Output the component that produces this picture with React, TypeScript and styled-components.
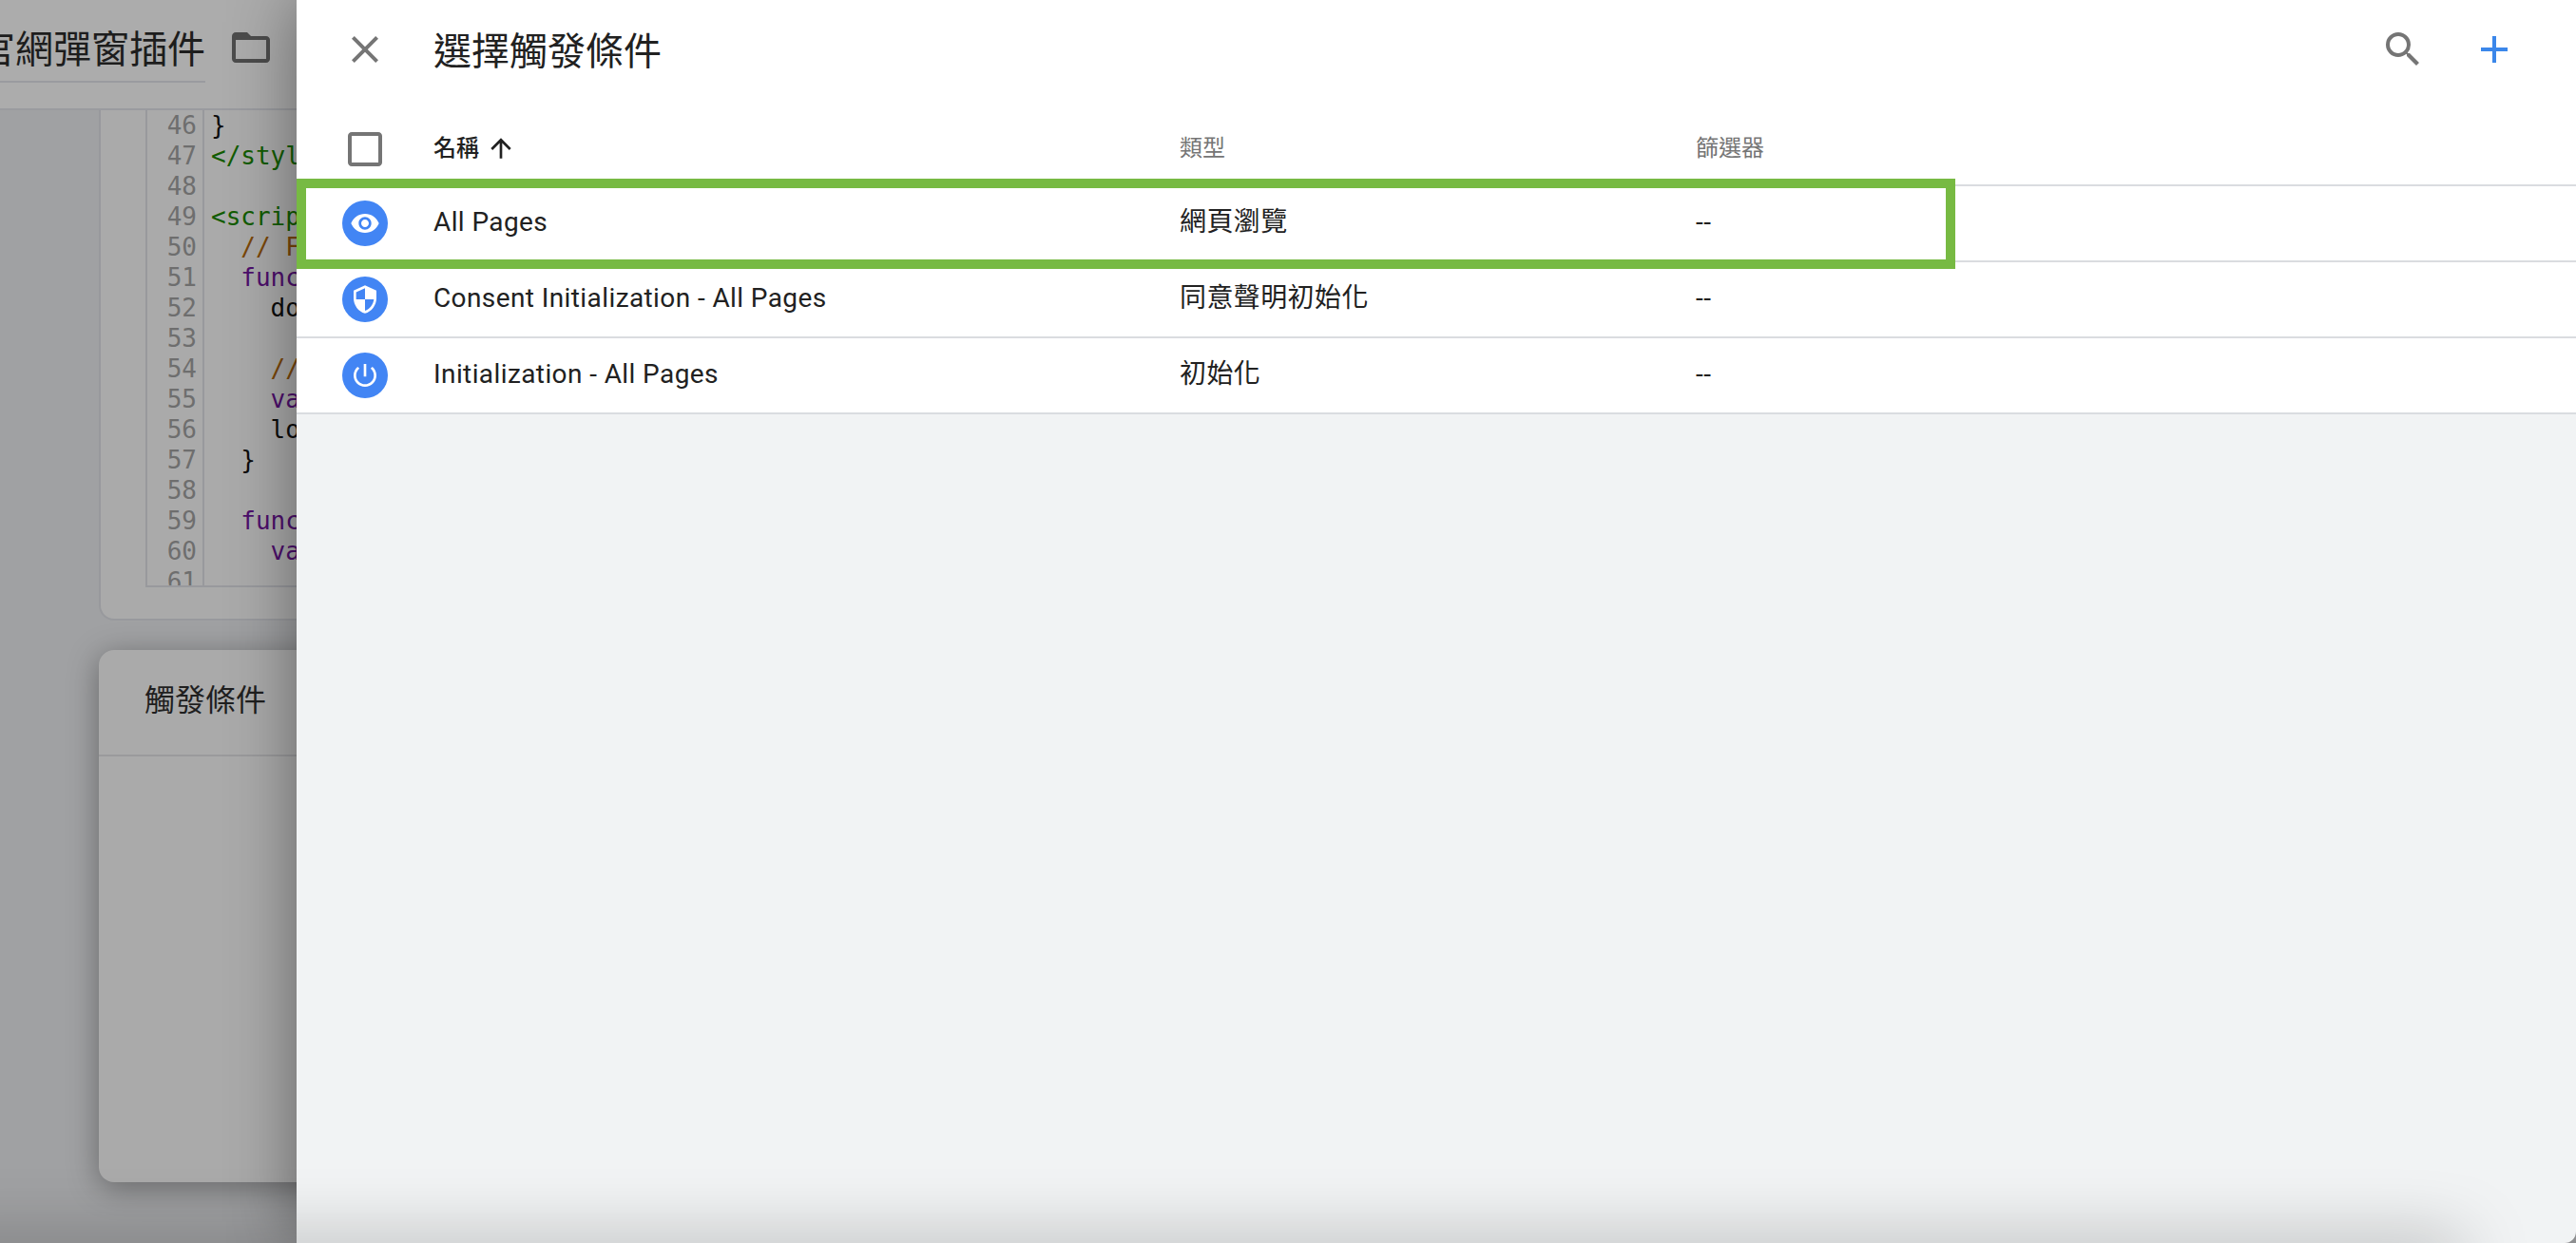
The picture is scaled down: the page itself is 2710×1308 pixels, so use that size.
import styled, { createGlobalStyle } from "styled-components";

const GlobalStyle = createGlobalStyle`
  html, body {
    margin: 0;
    padding: 0;
    background: #a0a1a3;
  }
  * {
    box-sizing: border-box;
  }
`;

const CJK = `Roboto, "Noto Sans CJK TC", sans-serif`;
const COLUMNS = "144px 785px 543px 1fr";

const Page = styled.div`
  position: relative;
  display: flex;
  width: 2710px;
  height: 1308px;
  overflow: hidden;
  font-family: ${CJK};

  &::after {
    content: "";
    position: absolute;
    left: -80px;
    right: 120px;
    bottom: -30px;
    height: 30px;
    z-index: 3;
    box-shadow: 0 0 70px rgba(0, 0, 0, 0.36);
    pointer-events: none;
  }
`;

/* behind the drawer */
const Backdrop = styled.div`
  display: flex;
  flex-direction: column;
  flex: 0 0 312px;
  width: 312px;
  overflow: hidden;
  background: #a0a1a3;
`;

const EditorBar = styled.div`
  display: flex;
  justify-content: flex-end;
  align-items: flex-start;
  gap: 24px;
  flex: 0 0 116px;
  padding: 26px 24px 0 0;
  background: #acacac;
  border-bottom: 2px solid #9a9b9f;
`;

const EditorTitle = styled.div`
  flex-shrink: 0;
  height: 61px;
  font-size: 40px;
  line-height: 54px;
  white-space: nowrap;
  color: #1d1d1d;
  border-bottom: 2px solid #9a9b9f;
`;

const Glyph = styled.svg<{ $size: number; $color: string }>`
  display: block;
  flex-shrink: 0;
  width: ${({ $size }) => $size}px;
  height: ${({ $size }) => $size}px;
  fill: ${({ $color }) => $color};
`;

const Cards = styled.div`
  display: flex;
  flex-direction: column;
  gap: 31px;
  padding-left: 104px;
`;

const CodeCard = styled.div`
  width: 800px;
  height: 537px;
  padding-left: 47px;
  background: #aaaaaa;
  border: 2px solid #98999d;
  border-top: 0;
  border-radius: 0 0 16px 16px;
`;

const CodeBox = styled.div`
  display: flex;
  height: 502px;
  overflow: hidden;
  font-family: "DejaVu Sans Mono", monospace;
  font-size: 26px;
  line-height: 32px;
  border-left: 2px solid #98999d;
  border-bottom: 2px solid #98999d;
`;

const Gutter = styled.div`
  flex: 0 0 60px;
  padding-right: 6px;
  text-align: right;
  color: #6e6e6e;
  border-right: 2px solid #98999d;
`;

const CodeLines = styled.div`
  padding-left: 7px;
  white-space: pre;
`;

const CodeLine = styled.div<{ $tone?: "tag" | "comment" | "keyword" }>`
  height: 32px;
  color: ${({ $tone }) =>
    $tone === "tag"
      ? "#125c00"
      : $tone === "comment"
        ? "#7a4708"
        : $tone === "keyword"
          ? "#4d0f6c"
          : "#0c0c0c"};
`;

const TriggerCard = styled.div`
  width: 800px;
  height: 560px;
  background: #aaaaaa;
  border-radius: 16px;
  box-shadow: 0 6px 32px rgba(0, 0, 0, 0.36);
`;

const TriggerHeader = styled.div`
  height: 112px;
  padding: 30px 0 0 48px;
  font-size: 32px;
  line-height: 46px;
  color: #1f1f1f;
  border-bottom: 2px solid #9a9a9c;
`;

/* drawer */
const Drawer = styled.div`
  position: relative;
  z-index: 2;
  flex: 1;
  display: flex;
  flex-direction: column;
  background: #f1f3f4;
  border-bottom-right-radius: 12px;
  box-shadow: 0 0 70px rgba(0, 0, 0, 0.42);
`;

const TopBar = styled.div`
  display: flex;
  align-items: center;
  flex: 0 0 104px;
  padding: 0 62px 0 48px;
  background: #ffffff;
`;

const DrawerTitle = styled.div`
  flex: 1;
  margin-left: 48px;
  padding-top: 6px;
  font-size: 40px;
  line-height: 56px;
  color: #212121;
`;

const TopActions = styled.div`
  display: flex;
  gap: 48px;
`;

const HeadRow = styled.div`
  display: grid;
  grid-template-columns: ${COLUMNS};
  align-items: center;
  height: 92px;
  padding-top: 14px;
  background: #ffffff;
  border-bottom: 2px solid #dadce0;
`;

const CheckCell = styled.div`
  margin-top: 2px;
  padding-left: 48px;
`;

const NameHead = styled.div`
  display: flex;
  align-items: center;
  gap: 7px;
  font-size: 24px;
  font-weight: 500;
  line-height: 32px;
  color: #212121;
`;

const PlainHead = styled.div`
  font-size: 24px;
  line-height: 32px;
  color: #757575;
`;

const Table = styled.div`
  position: relative;
`;

const Row = styled.div`
  display: grid;
  grid-template-columns: ${COLUMNS};
  align-items: center;
  height: 80px;
  font-size: 28px;
  line-height: 40px;
  letter-spacing: 0.4px;
  color: #212121;
  background: #ffffff;
  border-bottom: 2px solid #dadce0;
`;

const RowText = styled.div`
  margin-top: -2px;
`;

const IconCell = styled.div`
  padding-left: 48px;
`;

const IconBadge = styled.div`
  display: flex;
  align-items: center;
  justify-content: center;
  width: 48px;
  height: 48px;
  border-radius: 50%;
  background: #4285f4;
`;

const Highlight = styled.div`
  position: absolute;
  left: 0;
  top: -8px;
  width: 1745px;
  height: 95px;
  border: 10px solid #77ba43;
  pointer-events: none;
`;

const PATHS = {
  close:
    "M19 6.41L17.59 5 12 10.59 6.41 5 5 6.41 10.59 12 5 17.59 6.41 19 12 13.41 17.59 19 19 17.59 13.41 12z",
  search:
    "M15.5 14h-.79l-.28-.27A6.471 6.471 0 0 0 16 9.5 6.5 6.5 0 1 0 9.5 16c1.61 0 3.09-.59 4.23-1.57l.27.28v.79l5 4.99L20.49 19l-4.99-5zm-6 0C7.01 14 5 11.99 5 9.5S7.01 5 9.5 5 14 7.01 14 9.5 11.99 14 9.5 14z",
  add: "M19 13h-6v6h-2v-6H5v-2h6V5h2v6h6v2z",
  checkbox:
    "M19 5v14H5V5h14m0-2H5c-1.1 0-2 .9-2 2v14c0 1.1.9 2 2 2h14c1.1 0 2-.9 2-2V5c0-1.1-.9-2-2-2z",
  arrowUp: "M4 12l1.41 1.41L11 7.83V20h2V7.83l5.58 5.59L20 12l-8-8-8 8z",
  eye: "M12 4.5C7 4.5 2.73 7.61 1 12c1.73 4.39 6 7.5 11 7.5s9.27-3.11 11-7.5c-1.73-4.39-6-7.5-11-7.5zM12 17c-2.76 0-5-2.24-5-5s2.24-5 5-5 5 2.24 5 5-2.24 5-5 5zm0-8c-1.66 0-3 1.34-3 3s1.34 3 3 3 3-1.34 3-3-1.34-3-3-3z",
  shield:
    "M12 1L3 5v6c0 5.55 3.84 10.74 9 12 5.16-1.26 9-6.45 9-12V5l-9-4zm0 10.99h7c-.53 4.12-3.28 7.79-7 8.94V12H5V6.3l7-3.11v8.8z",
  power:
    "M13 3h-2v10h2V3zm4.83 2.17l-1.42 1.42C17.99 7.86 19 9.81 19 12c0 3.87-3.13 7-7 7s-7-3.13-7-7c0-2.19 1.01-4.14 2.58-5.42L6.17 5.17C4.23 6.82 3 9.26 3 12c0 4.97 4.03 9 9 9s9-4.03 9-9c0-2.74-1.23-5.18-3.17-6.83z",
  folder:
    "M20 6h-8l-2-2H4c-1.1 0-1.99.9-1.99 2L2 18c0 1.1.9 2 2 2h16c1.1 0 2-.9 2-2V8c0-1.1-.9-2-2-2zm0 12H4V8h16v10z",
};

function Icon({
  name,
  size = 48,
  color = "#757575",
}: {
  name: keyof typeof PATHS;
  size?: number;
  color?: string;
}) {
  return (
    <Glyph viewBox="0 0 24 24" $size={size} $color={color}>
      <path d={PATHS[name]} />
    </Glyph>
  );
}

type Tone = "tag" | "comment" | "keyword" | undefined;

const CODE: [number, string, Tone][] = [
  [46, "}", undefined],
  [47, "</styl", "tag"],
  [48, "", undefined],
  [49, "<scrip", "tag"],
  [50, "  // F", "comment"],
  [51, "  func", "keyword"],
  [52, "    do", undefined],
  [53, "", undefined],
  [54, "    //", "comment"],
  [55, "    va", "keyword"],
  [56, "    lo", undefined],
  [57, "  }", undefined],
  [58, "", undefined],
  [59, "  func", "keyword"],
  [60, "    va", "keyword"],
  [61, "", undefined],
];

const TRIGGERS: { icon: keyof typeof PATHS; name: string; type: string }[] = [
  { icon: "eye", name: "All Pages", type: "網頁瀏覽" },
  { icon: "shield", name: "Consent Initialization - All Pages", type: "同意聲明初始化" },
  { icon: "power", name: "Initialization - All Pages", type: "初始化" },
];

export default function App() {
  return (
    <Page>
      <GlobalStyle />
      <Backdrop>
        <EditorBar>
          <EditorTitle>官網彈窗插件</EditorTitle>
          <Icon name="folder" color="#4c4c4c" />
        </EditorBar>
        <Cards>
          <CodeCard>
            <CodeBox>
              <Gutter>
                {CODE.map(([line]) => (
                  <div key={line}>{line}</div>
                ))}
              </Gutter>
              <CodeLines>
                {CODE.map(([line, text, tone]) => (
                  <CodeLine key={line} $tone={tone}>
                    {text}
                  </CodeLine>
                ))}
              </CodeLines>
            </CodeBox>
          </CodeCard>
          <TriggerCard>
            <TriggerHeader>觸發條件</TriggerHeader>
          </TriggerCard>
        </Cards>
      </Backdrop>
      <Drawer>
        <TopBar>
          <Icon name="close" />
          <DrawerTitle>選擇觸發條件</DrawerTitle>
          <TopActions>
            <Icon name="search" />
            <Icon name="add" color="#3b87ea" />
          </TopActions>
        </TopBar>
        <HeadRow>
          <CheckCell>
            <Icon name="checkbox" />
          </CheckCell>
          <NameHead>
            名稱
            <Icon name="arrowUp" size={32} color="#212121" />
          </NameHead>
          <PlainHead>類型</PlainHead>
          <PlainHead>篩選器</PlainHead>
        </HeadRow>
        <Table>
          {TRIGGERS.map((t) => (
            <Row key={t.name}>
              <IconCell>
                <IconBadge>
                  <Icon name={t.icon} size={32} color="#ffffff" />
                </IconBadge>
              </IconCell>
              <RowText>{t.name}</RowText>
              <RowText>{t.type}</RowText>
              <RowText>--</RowText>
            </Row>
          ))}
          <Highlight />
        </Table>
      </Drawer>
    </Page>
  );
}
